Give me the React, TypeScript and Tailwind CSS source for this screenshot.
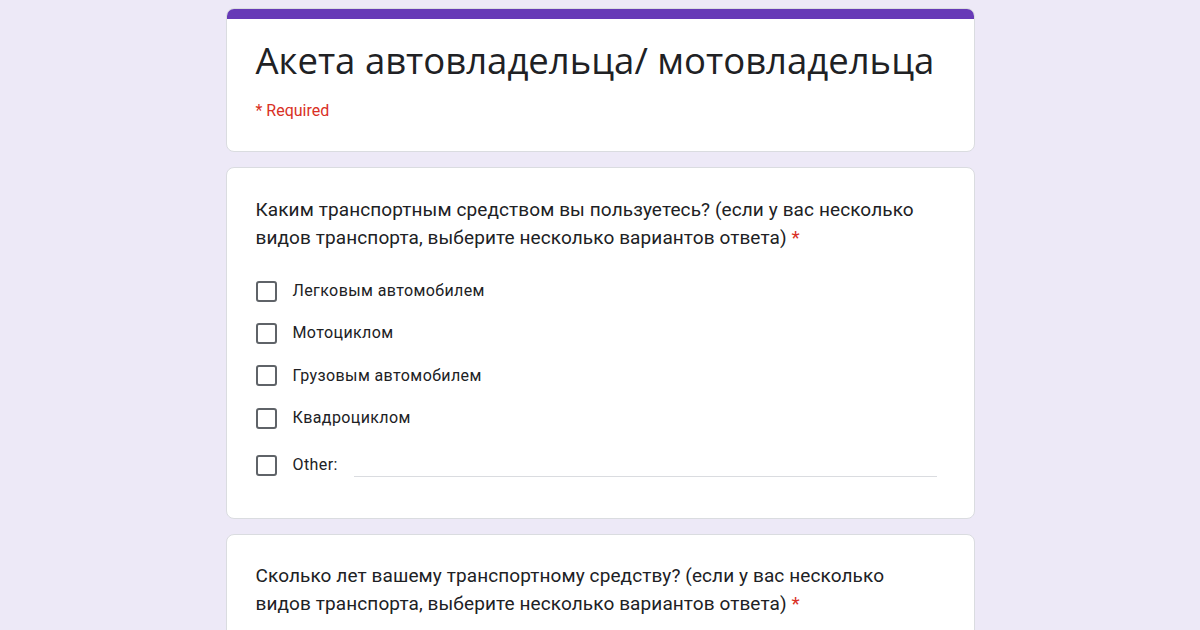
import React from "react";

const options = ["Легковым автомобилем", "Мотоциклом", "Грузовым автомобилем", "Квадроциклом"];

function Box() {
  return <div className="w-[21px] h-[21px] rounded-[3px] border-2 border-[#5f6368] shrink-0" />;
}

export default function App() {
  return (
    <div className="w-[1200px] h-[630px] overflow-hidden bg-[#ede9f7] flex justify-center" style={{ fontFamily: "Roboto, 'Noto Sans', sans-serif" }}>
      <div className="w-[749px] pt-[8px] flex flex-col gap-[15px]">
        <div className="shrink-0 bg-white rounded-[8px] border border-[#dadce0] overflow-hidden">
          <div className="h-[10px] bg-[#673ab7]" />
          <div className="px-[29px] pt-[17px] pb-[30px]">
            <h1 className="text-[36.5px] leading-[48px] text-[#202124]" style={{ fontFamily: "'Open Sans', sans-serif" }}>Акета автовладельца/ мотовладельца</h1>
            <div className="mt-[17px] text-[16px] leading-[20px] text-[#d93025]">* Required</div>
          </div>
        </div>
        <div className="shrink-0 bg-white rounded-[8px] border border-[#dadce0] px-[29px] pt-[28px] pb-[27px]">
          <div className="text-[19px] tracking-[0.1px] leading-[28px] text-[#202124]">
            Каким транспортным средством вы пользуетесь? (если у вас несколько<br />видов транспорта, выберите несколько вариантов ответа) <span className="text-[#d93025]">*</span>
          </div>
          <div className="mt-[18px] flex flex-col">
            {options.map((o) => (
              <div key={o} className="h-[42.3px] flex items-center gap-[16px]">
                <Box />
                <span className="text-[16px] tracking-[0.4px] text-[#202124]">{o}</span>
              </div>
            ))}
            <div className="h-[52px] flex items-center gap-[16px]">
              <Box />
              <span className="text-[16px] tracking-[0.4px] text-[#202124]">Other:</span>
              <div className="flex-1 ml-[0px] mr-[8px] h-[24px] border-b border-[#dadce0]" />
            </div>
          </div>
        </div>
        <div className="shrink-0 bg-white rounded-[8px] border border-[#dadce0] px-[29px] pt-[27px] pb-[40px]">
          <div className="text-[19px] tracking-[0.1px] leading-[28px] text-[#202124]">
            Сколько лет вашему транспортному средству? (если у вас несколько<br />видов транспорта, выберите несколько вариантов ответа) <span className="text-[#d93025]">*</span>
          </div>
        </div>
      </div>
    </div>
  );
}
